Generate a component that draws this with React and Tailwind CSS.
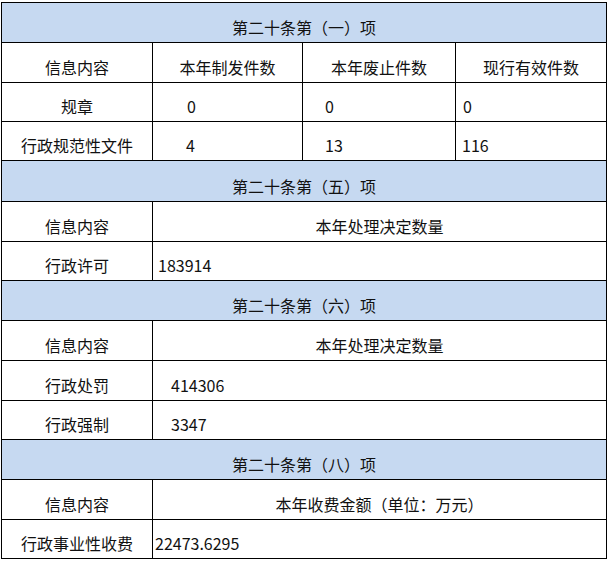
import React from "react";

const font = { fontFamily: '"Noto Sans CJK SC", "Noto Sans", sans-serif' };

function Head({ children, h }) {
  return (
    <tr className={h}>
      <td colSpan={4} className="border border-black bg-[#c6d9f1] text-center align-bottom pb-[5px] leading-[20px]">
        {children}
      </td>
    </tr>
  );
}

const cell = "border border-black align-bottom pb-[5px] leading-[20px]";

export default function App() {
  return (
    <div className="bg-white w-[608px] h-[561px] pt-[2px] pl-[1px] text-[16px] text-[#111]" style={font}>
      <table className="table-fixed border-collapse w-[605px]">
        <colgroup>
          <col className="w-[151px]" />
          <col className="w-[150px]" />
          <col className="w-[153px]" />
          <col className="w-[151px]" />
        </colgroup>
        <tbody>
          <Head h="h-[40px]">第二十条第（一）项</Head>
          <tr className="h-[40px]">
            <td className={`${cell} text-center`}>信息内容</td>
            <td className={`${cell} text-center`}>本年制发件数</td>
            <td className={`${cell} text-center`}>本年废止件数</td>
            <td className={`${cell} text-center`}>现行有效件数</td>
          </tr>
          <tr className="h-[39px]">
            <td className={`${cell} text-center`}>规章</td>
            <td className={`${cell} pl-[34px]`}>0</td>
            <td className={`${cell} pl-[22px]`}>0</td>
            <td className={`${cell} pl-[7px]`}>0</td>
          </tr>
          <tr className="h-[39px]">
            <td className={`${cell} text-center`}>行政规范性文件</td>
            <td className={`${cell} pl-[33px]`}>4</td>
            <td className={`${cell} pl-[22px]`}>13</td>
            <td className={`${cell} pl-[6px]`}>116</td>
          </tr>

          <Head h="h-[41px]">第二十条第（五）项</Head>
          <tr className="h-[40px]">
            <td className={`${cell} text-center`}>信息内容</td>
            <td colSpan={3} className={`${cell} text-center`}>本年处理决定数量</td>
          </tr>
          <tr className="h-[39px]">
            <td className={`${cell} text-center`}>行政许可</td>
            <td colSpan={3} className={`${cell} pl-[5px]`}>183914</td>
          </tr>

          <Head h="h-[40px]">第二十条第（六）项</Head>
          <tr className="h-[40px]">
            <td className={`${cell} text-center`}>信息内容</td>
            <td colSpan={3} className={`${cell} text-center`}>本年处理决定数量</td>
          </tr>
          <tr className="h-[40px]">
            <td className={`${cell} text-center`}>行政处罚</td>
            <td colSpan={3} className={`${cell} pl-[18px]`}>414306</td>
          </tr>
          <tr className="h-[39px]">
            <td className={`${cell} text-center`}>行政强制</td>
            <td colSpan={3} className={`${cell} pl-[18px]`}>3347</td>
          </tr>

          <Head h="h-[40px]">第二十条第（八）项</Head>
          <tr className="h-[40px]">
            <td className={`${cell} text-center`}>信息内容</td>
            <td colSpan={3} className={`${cell} text-center`}>本年收费金额（单位：万元）</td>
          </tr>
          <tr className="h-[39px]">
            <td className={`${cell} text-center`}>行政事业性收费</td>
            <td colSpan={3} className={`${cell} pl-[2px]`}>22473.6295</td>
          </tr>
        </tbody>
      </table>
    </div>
  );
}
